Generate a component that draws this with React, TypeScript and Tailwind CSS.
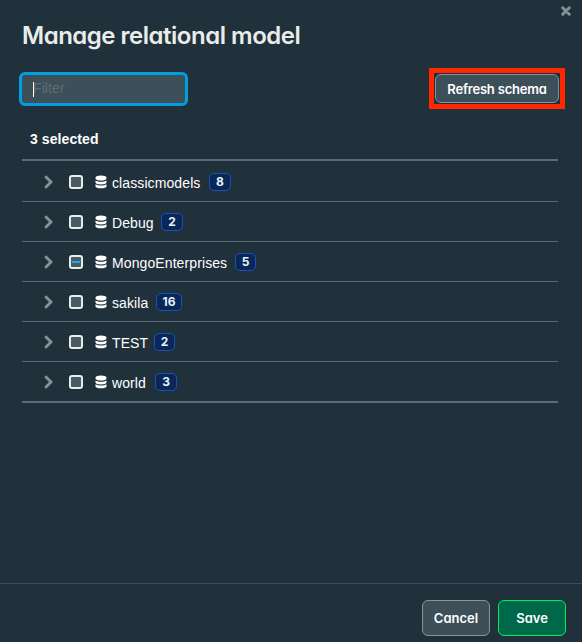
const heading = "font-[Inter,'Liberation_Sans',sans-serif] [font-feature-settings:'cv11']";

type Row = { name: string; count: number; partial?: boolean; label: string; badge: string };

const rows: Row[] = [
  { name: 'classicmodels', count: 8, label: 'w-[97px]', badge: 'w-[22px]' },
  { name: 'Debug', count: 2, label: 'w-[49px]', badge: 'w-[22px]' },
  { name: 'MongoEnterprises', count: 5, partial: true, label: 'w-[123px]', badge: 'w-[21px]' },
  { name: 'sakila', count: 16, label: 'w-[44px]', badge: 'w-[26px]' },
  { name: 'TEST', count: 2, label: 'w-[42px]', badge: 'w-[21px]' },
  { name: 'world', count: 3, label: 'w-[43px]', badge: 'w-[22px]' },
];

function Chevron() {
  return (
    <svg width="10" height="14" viewBox="0 0 10 14" fill="none" className="shrink-0">
      <path d="M2 2 L7 7 L2 12" stroke="#889397" strokeWidth="2.8" strokeLinecap="round" strokeLinejoin="miter" />
    </svg>
  );
}

function Database() {
  return (
    <svg width="12" height="14" viewBox="0 0 12 14" fill="#fff" className="shrink-0">
      <path d="M.5 2.700C.5 1.200 3 .5 6 .5s5.500.7 5.500 2.200v.8C11.500 4.800 9 5.600 6 5.600S.5 4.800.5 3.500z" />
      <path d="M.5 5.400C1.800 6.300 3.800 6.700 6 6.700s4.200-.4 5.500-1.300v2C11.500 8.700 9 9.400 6 9.400S.5 8.700.5 7.400z" />
      <path d="M.5 9.200c1.300.9 3.300 1.300 5.500 1.300s4.200-.4 5.500-1.300v2c0 1.400-2.500 2.100-5.500 2.100S.5 12.600.5 11.200z" />
    </svg>
  );
}

function Checkbox({ partial }: { partial?: boolean }) {
  return (
    <span className="flex h-[14px] w-[14px] shrink-0 items-center justify-center rounded-[3px] border-2 border-[#e8edeb] bg-[#4b5b64]">
      {partial && <span className="h-[2px] w-[8px] bg-[#20a8e8]" />}
    </span>
  );
}

export default function App() {
  return (
    <div className="flex h-[642px] w-[582px] flex-col overflow-hidden bg-[#21313c] font-['Liberation_Sans',Arial,sans-serif] text-white">
      <div className="flex h-[22px] shrink-0 justify-end pt-[6px] pr-[11px]">
        <svg width="10" height="10" viewBox="0 0 10 10">
          <path d="M1.700 1.700 L8.300 8.300 M8.300 1.700 L1.700 8.300" stroke="#889397" strokeWidth="2.900" strokeLinecap="round" />
        </svg>
      </div>
      <h1 className={`${heading} h-[46px] shrink-0 pl-[22px] text-[24px] leading-[28px] font-semibold tracking-[-0.49px] whitespace-nowrap text-[#e8edeb]`}>
        Manage relational model
      </h1>
      <div className="flex h-[41px] shrink-0 items-start justify-between pr-[17px] pl-[19px]">
        <div className="mt-1 flex h-[34px] w-[169px] items-center rounded-[6px] border-[3px] border-[#019ee2] bg-[#3d4f58] pl-[11px]">
          <span className="h-[15px] w-px bg-white" />
          <span className="-mt-[3px] -ml-px text-[14px] leading-[20px] tracking-[0.1px] text-[#5f6e76]">Filter</span>
        </div>
        <div className="h-[41px] w-[136px] border-[5px] border-[#ff2600] p-px">
          <button className={`${heading} block h-[29px] w-[124px] rounded-[6px] border border-[#889397] bg-[#3d4f58] pt-px text-[13px] leading-[27px] font-semibold tracking-[-0.2px] whitespace-nowrap`}>
            Refresh schema
          </button>
        </div>
      </div>
      <div className="ml-[22px] h-[50px] shrink-0 pt-5 pl-2 text-[14px] leading-[20px] font-bold tracking-[0.08px]">3 selected</div>
      <div className="mr-6 ml-[22px] border-t-2 border-b-2 border-[#5c6c75]">
        {rows.map((row, i) => (
          <div
            key={row.name}
            className={`flex items-center pl-[22px] ${i === rows.length - 1 ? 'h-[39px]' : i === 0 ? 'h-[41px] border-b border-[#5c6c75] pt-px' : 'h-10 border-b border-[#5c6c75]'}`}
          >
            <Chevron />
            <span className="w-[15px] shrink-0" />
            <Checkbox partial={row.partial} />
            <span className="w-3 shrink-0" />
            <Database />
            <span className={`${row.label} mt-[3px] ml-[5px] shrink-0 text-[14px] leading-[20px] tracking-[0.1px] whitespace-nowrap`}>{row.name}</span>
            <span className={`${row.badge} ${heading} flex h-[18px] shrink-0 items-center justify-center rounded-[5px] border border-[#1254b7] bg-[#0c2657] text-[12px] leading-[16px] font-bold text-[#e1f7ff]`}>
              {row.count}
            </span>
          </div>
        ))}
      </div>
      <div className="mt-auto flex h-[59px] shrink-0 justify-end gap-2 border-t border-[#3d4f58] pt-4 pr-4">
        <button className={`${heading} h-9 w-[68px] rounded-[6px] border border-[#889397] bg-[#3d4f58] pt-[2px] text-[13px] font-semibold`}>Cancel</button>
        <button className={`${heading} h-9 w-[68px] rounded-[6px] border border-[#00ed64] bg-[#00684a] pt-[2px] text-[13px] font-semibold`}>Save</button>
      </div>
    </div>
  );
}
